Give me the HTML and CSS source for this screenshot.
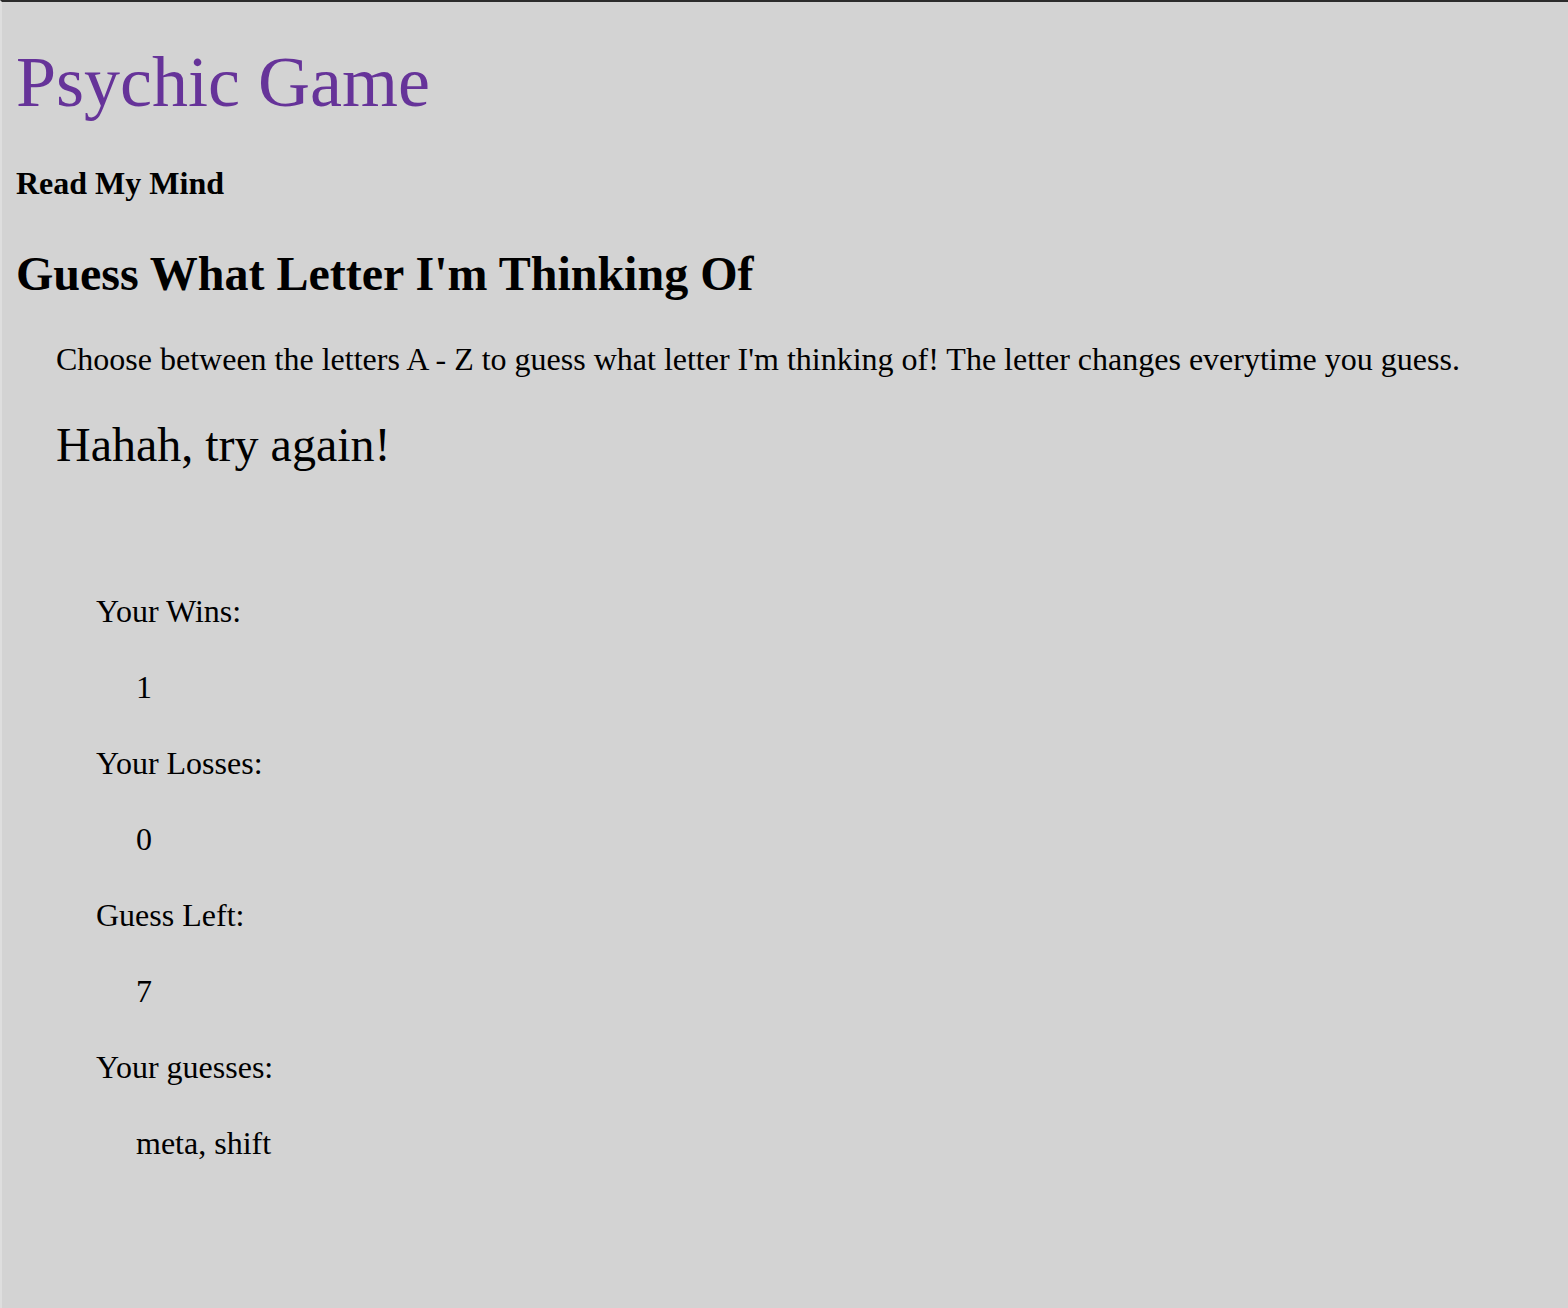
FILE: index.html
```html
<!DOCTYPE html>
<html>
<head>
<meta charset="utf-8">
<title>Psychic Game</title>
<link rel="stylesheet" href="styles.css">
</head>
<body>
<div class="page">
  <h1 class="title">Psychic Game</h1>
  <h4 class="tagline">Read My Mind</h4>
  <h2 class="heading">Guess What Letter I'm Thinking Of</h2>
  <div class="game">
    <p class="intro">Choose between the letters A - Z to guess what letter I'm thinking of! The letter changes everytime you guess.</p>
    <p class="message">Hahah, try again!</p>
    <div class="stats">
      <div class="label">Your Wins:</div>
      <div class="value">1</div>
      <div class="label">Your Losses:</div>
      <div class="value">0</div>
      <div class="label">Guess Left:</div>
      <div class="value">7</div>
      <div class="label">Your guesses:</div>
      <div class="value">meta, shift</div>
    </div>
  </div>
</div>
</body>
</html>
```

FILE: styles.css
```css
html, body {
  margin: 0;
  padding: 0;
}
body {
  background: #d3d3d3;
  font-family: "Liberation Serif", "Times New Roman", serif;
  color: #000;
  min-height: 1308px;
  box-sizing: border-box;
  border-top: 2px solid #2b2b2b;
  border-left: 2px solid #dedede;
}
.page {
  padding: 39px 14px 0 14px;
}
.title {
  margin: 0;
  font-size: 72px;
  font-weight: normal;
  line-height: 1.15;
  color: #663399;
}
.tagline {
  margin: 41px 0 0 0;
  font-size: 32px;
  font-weight: bold;
  line-height: 1.15;
}
.heading {
  margin: 44px 0 0 0;
  font-size: 48px;
  font-weight: bold;
  line-height: 1.15;
}
.game {
  padding-left: 40px;
}
.intro {
  margin: 40px 0 0 0;
  font-size: 32px;
  line-height: 1.15;
}
.message {
  margin: 39px 0 0 0;
  font-size: 48px;
  line-height: 1.15;
}
.stats {
  display: flex;
  flex-direction: column;
  gap: 40px;
  margin-top: 121px;
  padding-left: 40px;
  font-size: 32px;
  line-height: 36px;
}
.value {
  padding-left: 40px;
}
```
